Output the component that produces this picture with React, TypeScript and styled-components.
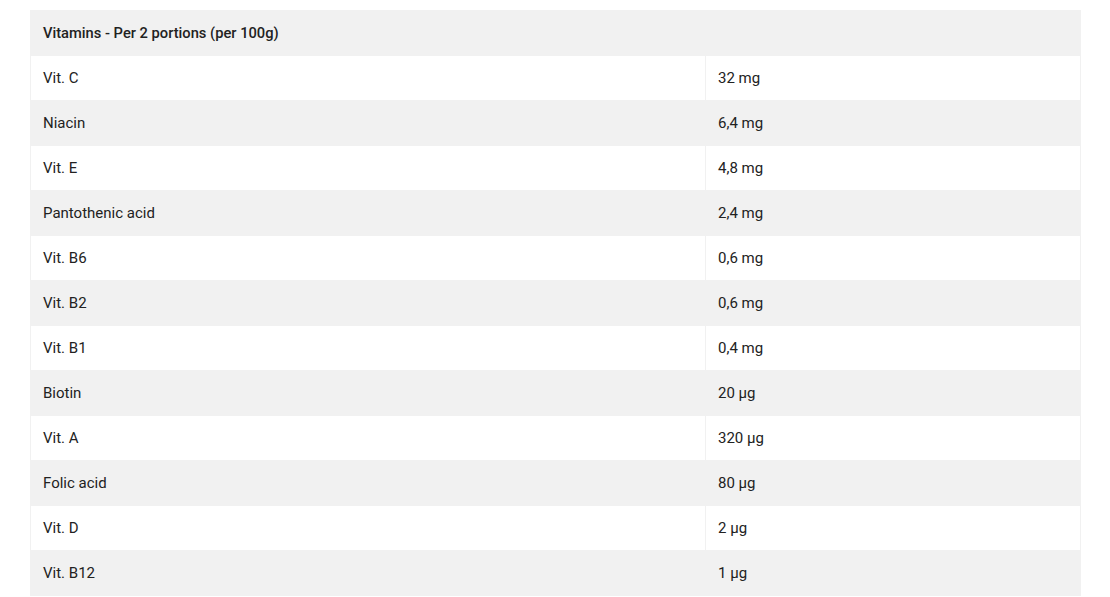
import React from "react";
import styled, { createGlobalStyle } from "styled-components";

const GlobalStyle = createGlobalStyle`
  html, body { margin: 0; padding: 0; background: #fff; }
  body { font-family: Roboto, "Noto Sans", Arial, sans-serif; }
`;

const Page = styled.div`
  padding: 10px 30px 0 30px;
`;

const Table = styled.table`
  width: 1050px;
  border-collapse: collapse;
  table-layout: fixed;
  font-size: 15px;
  color: #222;
`;

const HeaderCell = styled.th`
  height: 44px;
  padding: 0 12px;
  text-align: left;
  font-size: 14.7px;
  font-weight: 500;
  background: #f1f1f1;
  border: 1px solid #f1f1f1;
`;

const Row = styled.tr<{ $alt: boolean }>`
  height: 44px;
  background: ${(p) => (p.$alt ? "#f1f1f1" : "#fff")};
`;

const Cell = styled.td`
  height: 44px;
  padding: 0 12px;
  border: 1px solid #f1f1f1;
  vertical-align: middle;
`;

const rows: [string, string][] = [
  ["Vit. C", "32 mg"],
  ["Niacin", "6,4 mg"],
  ["Vit. E", "4,8 mg"],
  ["Pantothenic acid", "2,4 mg"],
  ["Vit. B6", "0,6 mg"],
  ["Vit. B2", "0,6 mg"],
  ["Vit. B1", "0,4 mg"],
  ["Biotin", "20 µg"],
  ["Vit. A", "320 µg"],
  ["Folic acid", "80 µg"],
  ["Vit. D", "2 µg"],
  ["Vit. B12", "1 µg"],
];

export default function App() {
  return (
    <>
      <GlobalStyle />
      <Page>
        <Table>
          <colgroup>
            <col style={{ width: 675 }} />
            <col style={{ width: 375 }} />
          </colgroup>
          <thead>
            <tr>
              <HeaderCell colSpan={2}>Vitamins - Per 2 portions (per 100g)</HeaderCell>
            </tr>
          </thead>
          <tbody>
            {rows.map(([name, value], i) => (
              <Row key={name + i} $alt={i % 2 === 1}>
                <Cell>{name}</Cell>
                <Cell>{value}</Cell>
              </Row>
            ))}
          </tbody>
        </Table>
      </Page>
    </>
  );
}
